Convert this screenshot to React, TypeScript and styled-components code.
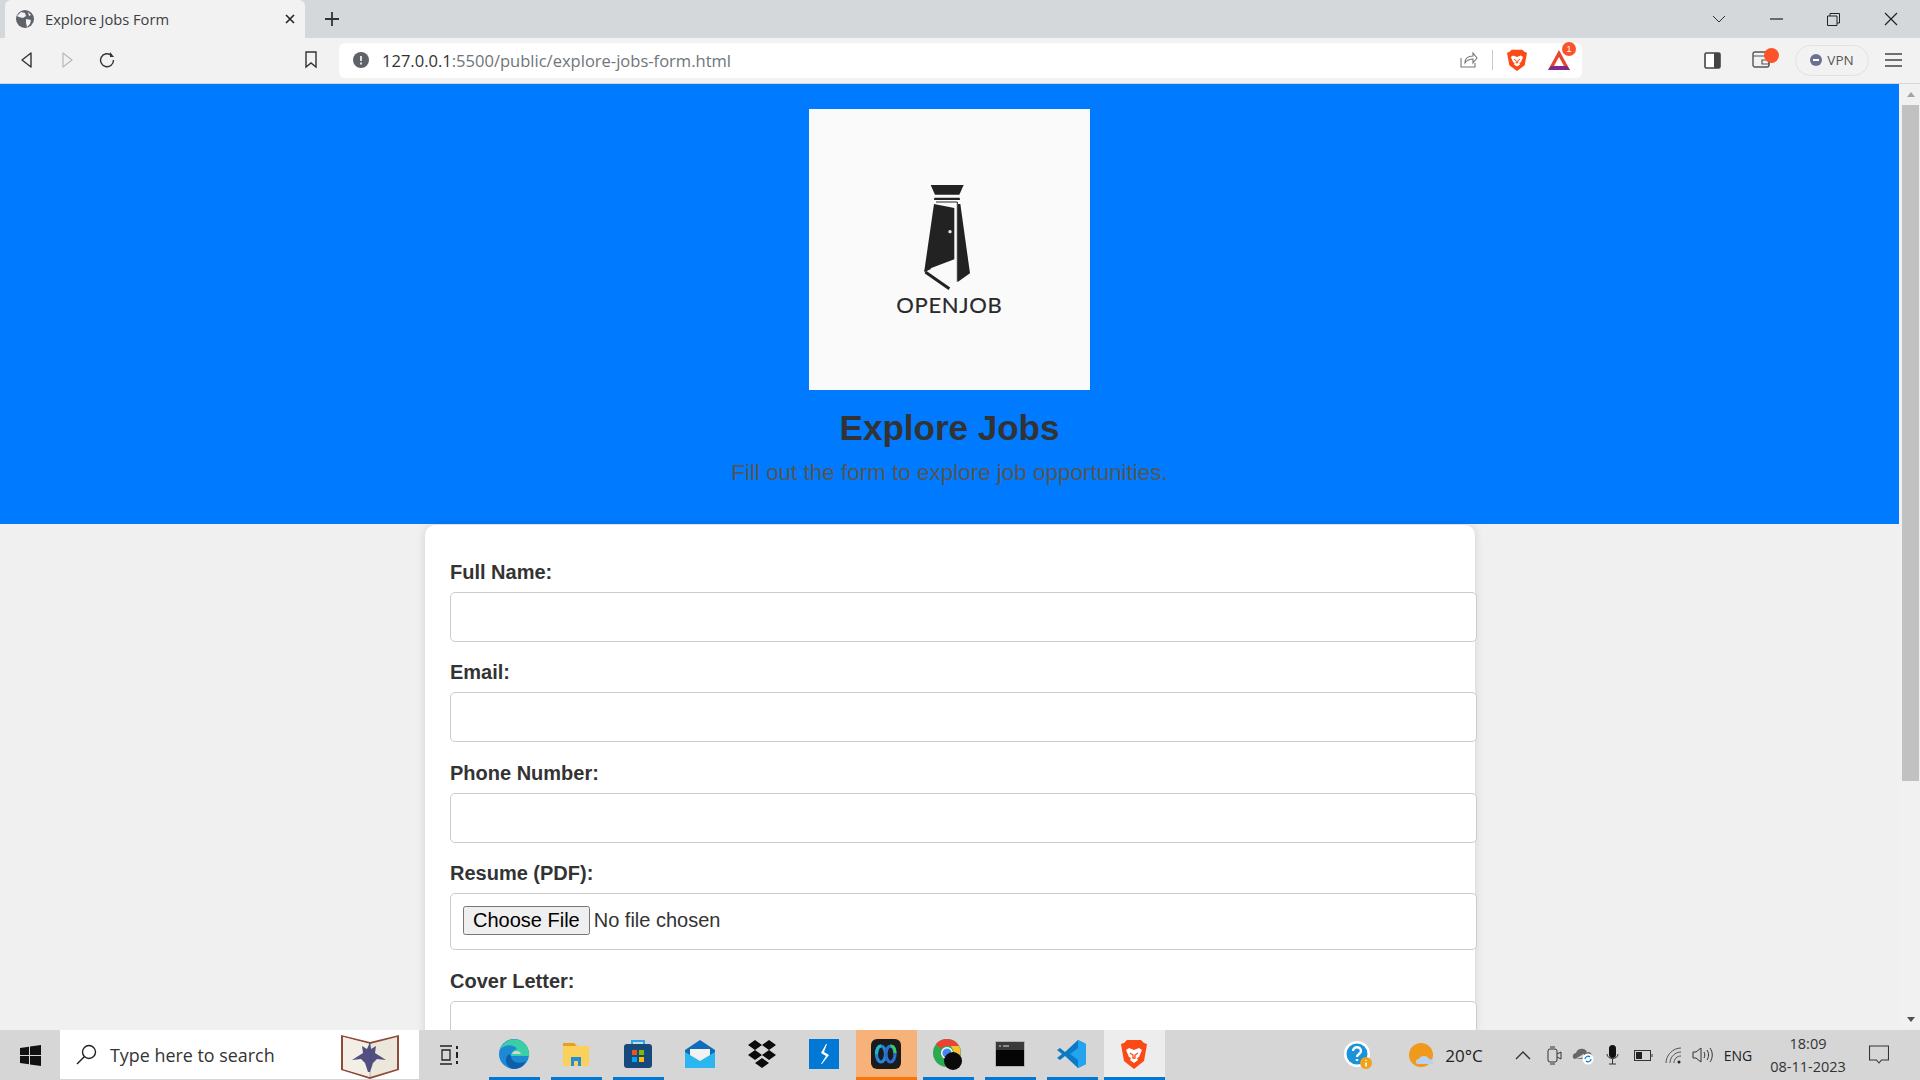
import { ReactNode } from "react";
import styled, { createGlobalStyle } from "styled-components";

const GlobalStyle = createGlobalStyle`
  html, body {
    margin: 0;
    padding: 0;
    height: 100%;
    overflow: hidden;
    background: #f0f0f0;
  }
  * { box-sizing: border-box; }
`;

const Screen = styled.div`
  width: 1920px;
  height: 1080px;
  display: flex;
  flex-direction: column;
  overflow: hidden;
  font-family: "Liberation Sans", Arial, sans-serif;
`;

/* browser chrome */
const TabStrip = styled.div`
  height: 38px;
  flex: none;
  background: #d5d8db;
  display: flex;
  align-items: stretch;
  padding-left: 5px;
`;

const Tab = styled.div`
  width: 300px;
  background: #f2f2f2;
  border-radius: 6px 6px 0 0;
  display: flex;
  align-items: center;
  padding: 0 9px 0 10px;
  gap: 10px;
`;

const TabTitle = styled.span`
  flex: 1;
  font-family: "Open Sans", sans-serif;
  font-size: 14.7px;
  color: #3c4043;
`;

const NewTab = styled.div`
  width: 54px;
  display: flex;
  align-items: center;
  justify-content: center;
`;

const WindowControls = styled.div`
  margin-left: auto;
  display: flex;
  align-items: center;
  padding-right: 22px;
  gap: 44px;
`;

const Toolbar = styled.div`
  height: 46px;
  flex: none;
  background: #f2f2f2;
  border-bottom: 1px solid #d6d6d6;
  display: flex;
  align-items: center;
  padding: 0 0 1px 18px;
`;

const NavIcons = styled.div`
  display: flex;
  align-items: center;
  gap: 22px;
  width: 275px;
`;

const BookmarkSlot = styled.div`
  width: 36px;
  margin-right: 10px;
  display: flex;
  justify-content: center;
`;

const AddressBar = styled.div`
  width: 1243px;
  height: 35px;
  background: #fff;
  border-radius: 6px;
  display: flex;
  align-items: center;
  padding: 0 0 0 14px;
`;

const UrlText = styled.div`
  margin-left: 13px;
  flex: 1;
  font-family: "Open Sans", sans-serif;
  font-size: 16.55px;
  color: #70757a;
  span { color: #333; }
`;

const AddressActions = styled.div`
  display: flex;
  align-items: center;
  gap: 14px;
  padding-right: 11px;
`;

const Divider = styled.div`
  width: 1px;
  height: 20px;
  background: #c8c8c8;
`;

const IconBadge = styled.div`
  position: relative;
  width: 24px;
  height: 24px;
  margin-left: 6px;
`;

const RedDot = styled.span`
  position: absolute;
  top: -6px;
  right: -5px;
  width: 14px;
  height: 14px;
  border-radius: 50%;
  background: #fb542b;
  color: #fff;
  font-size: 9px;
  line-height: 14px;
  text-align: center;
`;

const ToolbarRight = styled.div`
  display: flex;
  align-items: center;
  flex: 1;
  padding-left: 122px;
`;

const WalletSlot = styled.div`
  position: relative;
  width: 20px;
  height: 18px;
  margin-left: 31px;
`;

const WalletDot = styled.span`
  position: absolute;
  top: -3px;
  right: -7px;
  width: 15px;
  height: 15px;
  border-radius: 50%;
  background: #fb542b;
`;

const VpnPill = styled.div`
  width: 74px;
  height: 31px;
  margin-left: 23px;
  border: 1px solid #e2e2e2;
  border-radius: 16px;
  display: flex;
  align-items: center;
  justify-content: center;
  gap: 5px;
  font-family: "Open Sans", sans-serif;
  font-size: 13.5px;
  color: #555;
`;

const VpnDot = styled.span`
  width: 12px;
  height: 12px;
  border-radius: 50%;
  background: #6b7194;
  display: flex;
  align-items: center;
  justify-content: center;
  &::after {
    content: "";
    width: 6px;
    height: 2px;
    background: #fff;
  }
`;

const MenuSlot = styled.div`
  margin-left: 16px;
  display: flex;
`;

/* page viewport */
const Viewport = styled.div`
  flex: 1;
  min-height: 0;
  display: flex;
`;

const Page = styled.div`
  width: 1899px;
  overflow: hidden;
  background: #f0f0f0;
`;

const Header = styled.header`
  height: 440px;
  background: #007bff;
  padding-top: 25px;
  display: flex;
  flex-direction: column;
  align-items: center;
  color: #333;
`;

const LogoBox = styled.div`
  width: 281px;
  height: 281px;
  background: #fafafa;
  flex: none;
`;

const Title = styled.h1`
  margin: 17px 0 0;
  font-size: 35px;
  line-height: 41px;
  font-weight: 700;
`;

const Subtitle = styled.p`
  margin: 12px 0 0;
  font-size: 22.45px;
  line-height: 25px;
  color: #555;
`;

const Card = styled.form`
  width: 1050px;
  margin: 1px auto 0 425px;
  padding: 36px 25px;
  background: #fff;
  border-radius: 10px;
  box-shadow: 0 0 10px rgba(0, 0, 0, 0.13);
`;

const Label = styled.label`
  display: block;
  height: 23px;
  margin-bottom: 8px;
  font-size: 20px;
  line-height: 23px;
  font-weight: 700;
  color: #333;
`;

const Field = styled.input`
  display: block;
  width: 1027px;
  height: 50px;
  margin-bottom: 19.25px;
  padding: 12px;
  border: 1px solid #ccc;
  border-radius: 5px;
  background: #fff;
  font-size: 20px;
  font-family: "Liberation Sans", Arial, sans-serif;
  color: #333;
`;

const FileField = styled(Field)`
  height: 57px;
  margin-bottom: 19.75px;
  padding: 12px;
  &::file-selector-button {
    padding: 1px 8px;
    margin-right: 4px;
    font-size: 20px;
  }
`;

const CoverField = styled.textarea`
  display: block;
  width: 1027px;
  height: 120px;
  padding: 12px;
  border: 1px solid #ccc;
  border-radius: 5px;
`;

const ScrollTrack = styled.div`
  width: 21px;
  background: #f1f1f1;
  padding-left: 2px;
  display: flex;
  flex-direction: column;
  align-items: center;
  justify-content: space-between;
`;

const ScrollThumb = styled.div`
  width: 17px;
  height: 676px;
  background: #c1c1c1;
  margin-bottom: auto;
`;

const ScrollArrow = styled.div<{ $down?: boolean }>`
  flex: none;
  height: 21px;
  width: 17px;
  display: flex;
  align-items: center;
  justify-content: center;
  &::after {
    content: "";
    border-left: 4px solid transparent;
    border-right: 4px solid transparent;
    ${(p) =>
      p.$down
        ? "border-top: 5px solid #505050;"
        : "border-bottom: 5px solid #a3a3a3;"}
  }
`;

/* taskbar */
const Taskbar = styled.div`
  height: 50px;
  flex: none;
  background: #d6d6d6;
  display: flex;
  align-items: stretch;
`;

const StartButton = styled.div`
  width: 60px;
  display: flex;
  align-items: center;
  justify-content: center;
`;

const SearchBox = styled.div`
  width: 359px;
  height: 49px;
  background: #fff;
  display: flex;
  align-items: center;
  padding-left: 16px;
  position: relative;
`;

const SearchText = styled.span`
  margin-left: 13px;
  font-family: "Open Sans", sans-serif;
  font-size: 17.9px;
  color: #333;
`;

const SearchArt = styled.div`
  position: absolute;
  right: 19px;
  top: 3px;
`;

const TaskViewSlot = styled.div`
  width: 65px;
  padding-right: 5px;
  display: flex;
  align-items: center;
  justify-content: center;
`;

const AppRow = styled.div`
  display: flex;
  gap: 1px;
`;

const AppSlot = styled.div<{ $tone?: "open" | "alert" | "active" | "idle" }>`
  position: relative;
  width: 61px;
  display: flex;
  align-items: center;
  justify-content: center;
  padding: 0 2px 2px 0;
  background: ${(p) =>
    p.$tone === "alert" ? "#f7b27a" : p.$tone === "active" ? "#ededed" : "transparent"};
  &::after {
    content: "";
    position: absolute;
    left: ${(p) => (p.$tone === "alert" || p.$tone === "active" ? "0" : "5px")};
    bottom: 0;
    height: 3px;
    display: ${(p) => (p.$tone === "idle" ? "none" : "block")};
    width: ${(p) => (p.$tone === "alert" || p.$tone === "active" ? "61px" : "51px")};
    background: ${(p) => (p.$tone === "alert" ? "#f97306" : "#0078d4")};
  }
`;

const Tray = styled.div`
  margin-left: auto;
  display: flex;
  align-items: center;
  color: #222;
  font-family: "Open Sans", sans-serif;
`;

const TrayCell = styled.div<{ $w: number; $ml?: number }>`
  width: ${(p) => p.$w}px;
  margin-left: ${(p) => p.$ml ?? 0}px;
  display: flex;
  align-items: center;
  justify-content: center;
`;

const TrayText = styled.span<{ $size: number }>`
  font-size: ${(p) => p.$size}px;
  white-space: nowrap;
`;

const Clock = styled.div`
  width: 84px;
  margin-left: 12px;
  text-align: center;
  font-size: 14.5px;
  line-height: 23px;
  color: #333;
`;

/* drawings */
const Svg = ({ s, h, children, box }: { s: number; h?: number; box: string; children: ReactNode }) => (
  <svg width={s} height={h ?? s} viewBox={box} style={{ display: "block", flex: "none" }}>
    {children}
  </svg>
);

const Globe = () => (
  <Svg s={20} box="0 0 20 20">
    <circle cx="10" cy="10" r="9" fill="#5f6368" />
    <path d="M6 3l4 1 1 3-3 2-4-1-2-1zM11 10l5 1-1 4-3 3-1-4zM13 3l3 3-2 1z" fill="#f2f2f2" />
  </Svg>
);

const LogoMark = () => (
  <svg width="281" height="281" viewBox="27 27 843 843" style={{ display: "block" }}>
    <path d="M392 255H491L478 284H405Z" fill="#222" />
    <path d="M403 293H479L480 300H402Z" fill="#222" />
    <path d="M408 306L472 306V545" fill="none" stroke="#222" strokeWidth="3" />
    <path d="M402 312L463 324V478L392 505L373 512Z" fill="#222" />
    <path d="M474 312H481L510 520L474 545Z" fill="#222" />
    <path d="M376 516L448 566" stroke="#222" strokeWidth="9" />
    <path d="M373 514L392 505" stroke="#222" strokeWidth="5" />
    <circle cx="450" cy="395" r="5" fill="#e8e8e8" />
    <text
      x="448"
      y="640"
      textAnchor="middle"
      fontFamily="Lato, sans-serif"
      fontSize="66"
      letterSpacing="2"
      fill="#2a2a2a"
      stroke="#2a2a2a"
      strokeWidth="0.5"
    >
      OPENJOB
    </text>
  </svg>
);

const BraveLion = ({ w, h }: { w: number; h: number }) => (
  <svg width={w} height={h} viewBox="0 0 26 30" preserveAspectRatio="none" style={{ display: "block", flex: "none" }}>
    <path d="M6 1h14l3 3 3 1-1 6-2 11-10 8-10-8L1 11 0 5l3-1z" fill="#fb4a16" />
    <path d="M8 9l5 2 5-2 3 2-3 7-2 1 1 2-4 3-4-3 1-2-2-1-3-7z" fill="#fff" />
    <path d="M9 14l3 2v3h2v-3l3-2" fill="none" stroke="#fb4a16" strokeWidth="1.3" />
  </svg>
);

const Edge = () => (
  <svg width="32" height="32" viewBox="0 0 32 32" style={{ display: "block" }}>
    <circle cx="16" cy="16" r="15" fill="#1b8ad3" />
    <path d="M2 12C5 2 18-2 26 5c4 3 5 8 5 13H13c0-4 3-6 6-7-3-5-13-5-17 1z" fill="#3bd0a4" />
    <path d="M13 18c0 6 8 9 15 5-2 5-7 8-12 8-2 0-9-3-8-10 1-4 3-6 5-3z" fill="#0f5dad" />
    <path d="M14 16c1-4 8-4 9 0z" fill="#d6d6d6" />
  </svg>
);

const Folder = () => (
  <Svg s={28} box="0 0 28 28">
    <path d="M1 3h11l3 3H1z" fill="#e6a117" />
    <rect x="1" y="6" width="26" height="20" fill="#fcd15b" />
    <path d="M9 26v-9h10v9h-3v-5h-4v5z" fill="#1f8fd8" />
  </Svg>
);

const Store = () => (
  <Svg s={30} box="0 0 30 30">
    <rect x="1" y="5" width="28" height="24" rx="3" fill="#174a7c" />
    <path d="M9 5V2h12v3" fill="none" stroke="#27a9e8" strokeWidth="2" />
    <rect x="9" y="11" width="5" height="5" fill="#f25022" />
    <rect x="16" y="11" width="5" height="5" fill="#7fba00" />
    <rect x="9" y="18" width="5" height="5" fill="#00a4ef" />
    <rect x="16" y="18" width="5" height="5" fill="#ffb900" />
  </Svg>
);

const Mail = () => (
  <Svg s={30} box="0 0 30 28">
    <path d="M0 10L15 0l15 10v18H0z" fill="#0f6cbd" />
    <path d="M5 9h20v8l-10 6-10-6z" fill="#f2f2f2" />
    <path d="M0 12l15 9 15-9v16H0z" fill="#2cb6ef" />
  </Svg>
);

const Dropbox = () => (
  <Svg s={30} box="0 0 30 28">
    <path d="M8 0l7 5-7 5-7-5zM22 0l7 5-7 5-7-5zM8 10l7 5-7 5-7-5zM22 10l7 5-7 5-7-5zM15 18l7 5-7 5-7-5z" fill="#0b0b0b" />
  </Svg>
);

const Bolt = () => (
  <Svg s={30} box="0 0 30 30">
    <rect width="30" height="30" fill="#0078d4" />
    <path d="M17 5l-5 9 5 3-5 8 1 0 7-9-5-3 3-8z" fill="#fff" />
  </Svg>
);

const Webex = () => (
  <Svg s={30} box="0 0 30 30">
    <rect width="30" height="30" rx="6" fill="#1b1b1b" />
    <ellipse cx="10" cy="15" rx="4.500" ry="8" fill="none" stroke="#1f86d8" strokeWidth="3.200" />
    <ellipse cx="19.500" cy="15" rx="4.500" ry="8" fill="none" stroke="#2a6fd0" strokeWidth="3.200" />
    <path d="M19.500 7c3 0 4.500 3 4.500 7" fill="none" stroke="#3ec864" strokeWidth="3.200" />
    <path d="M5.500 15c0-4 1.500-8 4.500-8" fill="none" stroke="#22b5c9" strokeWidth="3.200" />
  </Svg>
);

const Chrome = () => (
  <Svg s={32} box="0 0 32 32">
    <circle cx="15" cy="15" r="14" fill="#2da94f" />
    <path d="M15 1a14 14 0 0 1 12 7H15a7 7 0 0 0-6 3L4 6a14 14 0 0 1 11-5z" fill="#ea4335" />
    <path d="M27 8a14 14 0 0 1-9 20l5-12-4-8z" fill="#fbc02d" />
    <circle cx="15" cy="15" r="6" fill="#fff" />
    <circle cx="15" cy="15" r="4.600" fill="#4285f4" />
    <circle cx="21" cy="23" r="9" fill="#0a0a0a" />
  </Svg>
);

const Terminal = () => (
  <Svg s={30} h={26} box="0 0 30 26">
    <rect x="0" y="0" width="30" height="26" fill="#b3b3b3" />
    <rect x="1" y="1" width="28" height="24" fill="#050505" />
    <rect x="1" y="1" width="28" height="8" fill="#3a3a3a" />
    <path d="M4 5h2M8 5h6" stroke="#ddd" strokeWidth="1" />
  </Svg>
);

const VsCode = () => (
  <Svg s={30} box="0 0 30 30">
    <path d="M21 1l8 4v20l-8 4L8 17l-5 4-3-2 5-4-5-4 3-2 5 4z" fill="#0b7ac4" />
    <path d="M21 1l8 4v20l-8 4zM21 9l-8 6 8 6z" fill="#24a3ee" fillRule="evenodd" />
  </Svg>
);

const BookArt = () => (
  <Svg s={60} h={46} box="0 0 60 46">
    <path d="M1 2l29 7 29-7v35l-29 9L1 37z" fill="#8f4a3a" />
    <path d="M3 4l27 7 27-7v32l-27 8-27-8z" fill="#ece7db" />
    <path d="M3 4l27 7v33l-27-8z" fill="#f3efe6" />
    <path d="M30 11v33" stroke="#b9b2a4" />
    <path
      d="M30 9l-3 7-5-3 1 7-11 7 9-1 4 4 3 9 2 0 3-9 4-4 9 1-11-7 1-7-5 3z"
      fill="#3b3a72"
      opacity="0.88"
    />
  </Svg>
);

export default function App() {
  const line = { fill: "none", stroke: "#333", strokeWidth: 1.4 };
  const apps = [
    { icon: <Edge />, tone: "open" as const },
    { icon: <Folder />, tone: "open" as const },
    { icon: <Store />, tone: "open" as const },
    { icon: <Mail />, tone: "idle" as const },
    { icon: <Dropbox />, tone: "idle" as const },
    { icon: <Bolt />, tone: "idle" as const },
    { icon: <Webex />, tone: "alert" as const },
    { icon: <Chrome />, tone: "open" as const },
    { icon: <Terminal />, tone: "open" as const },
    { icon: <VsCode />, tone: "open" as const },
    { icon: <BraveLion w={26} h={30} />, tone: "active" as const },
  ];

  return (
    <Screen>
      <GlobalStyle />
      <TabStrip>
        <Tab>
          <Globe />
          <TabTitle>Explore Jobs Form</TabTitle>
          <Svg s={12} box="0 0 12 12">
            <path d="M2 2l8 8M10 2l-8 8" stroke="#222" strokeWidth="1.6" />
          </Svg>
        </Tab>
        <NewTab>
          <Svg s={16} box="0 0 16 16">
            <path d="M8 1v14M1 8h14" stroke="#333" strokeWidth="1.8" />
          </Svg>
        </NewTab>
        <WindowControls>
          <Svg s={14} h={8} box="0 0 14 8">
            <path d="M1 1l6 6 6-6" {...line} strokeWidth={1} />
          </Svg>
          <Svg s={13} h={2} box="0 0 13 2">
            <path d="M0 1h13" stroke="#222" strokeWidth="1.2" />
          </Svg>
          <Svg s={13} box="0 0 13 13">
            <path d="M.5 3h9.500v9.500H.5zM3 3V.5h9.500V10H10" fill="none" stroke="#222" />
          </Svg>
          <Svg s={14} box="0 0 14 14">
            <path d="M1 1l12 12M13 1L1 13" stroke="#222" strokeWidth="1.2" />
          </Svg>
        </WindowControls>
      </TabStrip>

      <Toolbar>
        <NavIcons>
          <Svg s={18} box="0 0 18 18">
            <path d="M13 2L4 9l9 7z" {...line} strokeLinejoin="round" />
          </Svg>
          <Svg s={18} box="0 0 18 18">
            <path d="M5 2l9 7-9 7z" fill="none" stroke="#bbb" strokeWidth="1.3" strokeLinejoin="round" />
          </Svg>
          <Svg s={18} box="0 0 18 18">
            <path d="M13.500 4.500a6.500 6.500 0 1 0 2 4.500" {...line} />
            <path d="M12 1v5h4z" fill="#333" />
          </Svg>
        </NavIcons>
        <BookmarkSlot>
          <Svg s={12} h={18} box="0 0 12 18">
            <path d="M1 1h10v15l-5-4-5 4z" {...line} />
          </Svg>
        </BookmarkSlot>
        <AddressBar>
          <Svg s={16} box="0 0 16 16">
            <circle cx="8" cy="8" r="8" fill="#5f6368" />
            <path d="M8 4v5M8 10.500v2" stroke="#fff" strokeWidth="1.6" />
          </Svg>
          <UrlText>
            <span>127.0.0.1</span>:5500/public/explore-jobs-form.html
          </UrlText>
          <AddressActions>
            <Svg s={18} box="0 0 18 18">
              <path d="M1 7v9h14v-4M5 12c0-5 3-7 8-7V2l4 5-4 5V8c-4 0-6 1-8 4z" fill="none" stroke="#777" strokeWidth="1.1" />
            </Svg>
            <Divider />
            <BraveLion w={20} h={22} />
            <IconBadge>
              <Svg s={24} box="0 0 24 24">
                <path d="M12 2L23 22H1z" fill="#e8472d" />
                <path d="M12 9l5 9H7z" fill="#fff" />
                <path d="M1 22h22l-3-4H4z" fill="#7d2a8a" />
              </Svg>
              <RedDot>1</RedDot>
            </IconBadge>
          </AddressActions>
        </AddressBar>
        <ToolbarRight>
          <Svg s={17} box="0 0 17 17">
            <rect x="1" y="1" width="15" height="15" rx="1.5" fill="#fff" stroke="#444" strokeWidth="1.6" />
            <rect x="10" y="1" width="6" height="15" fill="#444" />
          </Svg>
          <WalletSlot>
            <Svg s={18} box="0 0 18 18">
              <rect x="1" y="1" width="16" height="15" rx="2" fill="none" stroke="#555" strokeWidth="1.4" />
              <path d="M1 5h16M10 9h7v4h-7z" fill="none" stroke="#555" strokeWidth="1.2" />
            </Svg>
            <WalletDot />
          </WalletSlot>
          <VpnPill>
            <VpnDot />
            VPN
          </VpnPill>
          <MenuSlot>
            <Svg s={17} h={14} box="0 0 17 14">
              <path d="M0 1h17M0 7h17M0 13h17" stroke="#444" strokeWidth="1.4" />
            </Svg>
          </MenuSlot>
        </ToolbarRight>
      </Toolbar>

      <Viewport>
        <Page>
          <Header>
            <LogoBox>
              <LogoMark />
            </LogoBox>
            <Title>Explore Jobs</Title>
            <Subtitle>Fill out the form to explore job opportunities.</Subtitle>
          </Header>
          <Card>
            <Label>Full Name:</Label>
            <Field type="text" />
            <Label>Email:</Label>
            <Field type="email" />
            <Label>Phone Number:</Label>
            <Field type="tel" />
            <Label>Resume (PDF):</Label>
            <FileField type="file" />
            <Label>Cover Letter:</Label>
            <CoverField />
          </Card>
        </Page>
        <ScrollTrack>
          <ScrollArrow />
          <ScrollThumb />
          <ScrollArrow $down />
        </ScrollTrack>
      </Viewport>

      <Taskbar>
        <StartButton>
          <Svg s={21} box="0 0 21 21">
            <path d="M0 3l9-1.300V10H0zM10 1.500L21 0v10H10zM0 11h9v8.300L0 18zM10 11h11v10l-11-1.500z" fill="#111" />
          </Svg>
        </StartButton>
        <SearchBox>
          <Svg s={21} box="0 0 21 21">
            <circle cx="13" cy="8" r="6.500" fill="none" stroke="#222" strokeWidth="1.4" />
            <path d="M8.500 12.500L1 20" stroke="#222" strokeWidth="1.5" />
          </Svg>
          <SearchText>Type here to search</SearchText>
          <SearchArt>
            <BookArt />
          </SearchArt>
        </SearchBox>
        <TaskViewSlot>
          <Svg s={20} box="0 0 20 20">
            <path d="M1 1h12M1 19h12M3 5h8v10H3z" fill="none" stroke="#222" strokeWidth="1.3" />
            <path d="M18 1v3M18 7v6M18 16v3" stroke="#222" strokeWidth="2" />
          </Svg>
        </TaskViewSlot>
        <AppRow>
          {apps.map((app, i) => (
            <AppSlot key={i} $tone={app.tone}>
              {app.icon}
            </AppSlot>
          ))}
        </AppRow>
        <Tray>
          <TrayCell $w={32}>
            <Svg s={30} box="0 0 30 30">
              <circle cx="14" cy="14" r="13" fill="#fff" />
              <circle cx="14" cy="14" r="10.500" fill="#1a93d8" />
              <path d="M10 11c0-5 8-5 8 0 0 3-4 3-4 6M14 19v2" fill="none" stroke="#fff" strokeWidth="2.4" />
              <circle cx="23" cy="23" r="6" fill="#f0a31a" />
              <path d="M23 20v1M23 22.500v4" stroke="#fff" strokeWidth="1.5" />
            </Svg>
          </TrayCell>
          <TrayCell $w={30} $ml={35}>
            <Svg s={30} box="0 0 30 30">
              <circle cx="12" cy="15" r="12" fill="#f09a1d" />
              <path d="M9 24c-3 0-3-5 1-5 1-4 9-4 10 0 5 0 6 5 2 5z" fill="#b9d3ee" />
            </Svg>
          </TrayCell>
          <TrayCell $w={38} $ml={6}>
            <TrayText $size={17}>20°C</TrayText>
          </TrayCell>
          <TrayCell $w={16} $ml={32}>
            <Svg s={16} h={9} box="0 0 16 9">
              <path d="M1 8l7-7 7 7" {...line} />
            </Svg>
          </TrayCell>
          <TrayCell $w={16} $ml={15}>
            <Svg s={15} h={19} box="0 0 15 19">
              <rect x="1" y="3" width="9" height="13" rx="2" {...line} strokeWidth={1} />
              <path d="M10 8l4-2v7l-4-2M3 1h5M3 18h5" {...line} strokeWidth={1} />
            </Svg>
          </TrayCell>
          <TrayCell $w={22} $ml={10}>
            <Svg s={22} h={20} box="0 0 22 20">
              <path d="M3 14c-4-1-2-6 1-6 1-5 9-6 11-1" fill="#666" />
              <path d="M3 14h9V8l5-1c1 0 3 2 3 4" fill="#666" />
              <circle cx="16" cy="14" r="5.500" fill="#fff" />
              <path d="M13 14a3 3 0 0 1 5-2M19 14a3 3 0 0 1-5 2" fill="none" stroke="#0078d4" strokeWidth="1.2" />
            </Svg>
          </TrayCell>
          <TrayCell $w={14} $ml={11}>
            <Svg s={13} h={20} box="0 0 13 20">
              <rect x="3" y="0" width="7" height="13" rx="3.500" fill="#111" />
              <path d="M1 9c0 6 11 6 11 0M6.500 14v5M3 19h7" {...line} strokeWidth={1} />
            </Svg>
          </TrayCell>
          <TrayCell $w={20} $ml={14}>
            <Svg s={19} h={11} box="0 0 19 11">
              <rect x=".5" y=".5" width="16" height="10" {...line} strokeWidth={1} />
              <rect x="2" y="2" width="6" height="7" fill="#222" />
              <path d="M18 4v3" stroke="#333" />
            </Svg>
          </TrayCell>
          <TrayCell $w={18} $ml={11}>
            <Svg s={17} box="0 0 17 17">
              <path d="M1 16C1 8 8 1 16 1M5 16c0-6 5-11 11-11M9 16c0-4 3-7 7-7" fill="none" stroke="#555" strokeWidth="1" />
              <circle cx="14" cy="15" r="1.500" fill="#222" />
            </Svg>
          </TrayCell>
          <TrayCell $w={22} $ml={9}>
            <Svg s={21} h={18} box="0 0 21 18">
              <path d="M1 6h3l5-4v14l-5-4H1z" {...line} strokeWidth={1} />
              <path d="M12 6c1 2 1 4 0 6M15 4c2 3 2 7 0 10M18 2c3 4 3 10 0 14" {...line} strokeWidth={1} />
            </Svg>
          </TrayCell>
          <TrayCell $w={32} $ml={9}>
            <TrayText $size={14}>ENG</TrayText>
          </TrayCell>
          <Clock>
            18:09
            <br />
            08-11-2023
          </Clock>
          <TrayCell $w={20} $ml={19}>
            <Svg s={20} h={20} box="0 0 20 20">
              <path d="M.5 1h19v14h-7l-2.500 3-2.500-3h-7z" {...line} strokeWidth={1.1} />
            </Svg>
          </TrayCell>
          <TrayCell $w={31} />
        </Tray>
      </Taskbar>
    </Screen>
  );
}
